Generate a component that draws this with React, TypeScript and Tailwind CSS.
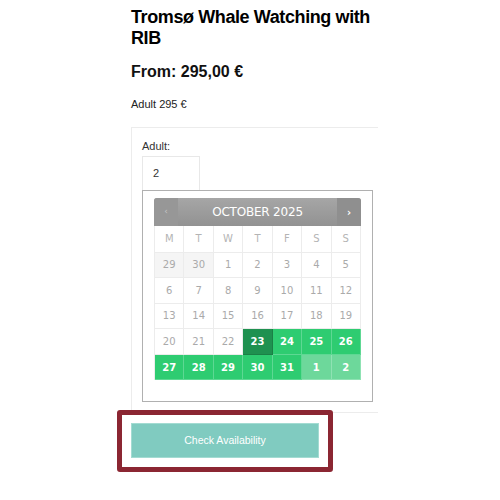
import React from "react";

type Cell = { d: string; kind: "other" | "past" | "sel" | "avail" | "next" };

const rows: Cell[][] = [
  [
    { d: "29", kind: "other" },
    { d: "30", kind: "other" },
    { d: "1", kind: "past" },
    { d: "2", kind: "past" },
    { d: "3", kind: "past" },
    { d: "4", kind: "past" },
    { d: "5", kind: "past" },
  ],
  ["6", "7", "8", "9", "10", "11", "12"].map((d) => ({ d, kind: "past" as const })),
  ["13", "14", "15", "16", "17", "18", "19"].map((d) => ({ d, kind: "past" as const })),
  [
    { d: "20", kind: "past" },
    { d: "21", kind: "past" },
    { d: "22", kind: "past" },
    { d: "23", kind: "sel" },
    { d: "24", kind: "avail" },
    { d: "25", kind: "avail" },
    { d: "26", kind: "avail" },
  ],
  [
    { d: "27", kind: "avail" },
    { d: "28", kind: "avail" },
    { d: "29", kind: "avail" },
    { d: "30", kind: "avail" },
    { d: "31", kind: "avail" },
    { d: "1", kind: "next" },
    { d: "2", kind: "next" },
  ],
];

function cellClass(kind: Cell["kind"]) {
  switch (kind) {
    case "other":
      return "bg-[#f5f5f5] text-[#aaaaaa] border-[#ececec]";
    case "past":
      return "bg-white text-[#aaaaaa] border-[#ececec]";
    case "sel":
      return "bg-[#1f9150] text-white font-bold border-[#1b8046]";
    case "avail":
      return "bg-[#2ecc71] text-white font-bold border-[#5ed893]";
    case "next":
      return "bg-[#6dd89b] text-white font-bold border-[#8fe2b3]";
  }
}

export default function App() {
  return (
    <div className="relative w-[500px] h-[500px] bg-white overflow-hidden" style={{ fontFamily: '"Liberation Sans", Arial, sans-serif' }}>
      <div className="pl-[131px] pt-[7px]">
        <h1 className="text-[18px] leading-[21px] font-bold text-black tracking-[-0.4px] w-[260px]">
          Tromsø Whale Watching with RIB
        </h1>
        <div className="mt-[13px] text-[16px] leading-[20px] font-bold text-[#111]">From: 295,00 €</div>
        <div className="mt-[15px] text-[11px] leading-[14px] text-[#222]">Adult 295 €</div>

        <div className="mt-[16px] w-[247px] border-l border-t border-b border-[#ececec] pl-[10px] pt-[11px] pb-[10px]">
          <div className="text-[11px] leading-[14px] text-[#333]">Adult:</div>
          <div className="mt-[3px] w-[58px] h-[35px] border border-[#e8e8e8] pl-[10px] pt-[9px] text-[11px] leading-[14px] text-[#333]">
            2
          </div>
          <div className="-mt-[1px] w-[231px] border border-[#b0b0b0] px-[11px] pt-[7px] pb-[21px]" style={{ fontFamily: '"DejaVu Sans", Verdana, sans-serif' }}>
            <div className="flex h-[28px] rounded-t-[3px] overflow-hidden bg-gradient-to-b from-[#a6a6a6] to-[#929292]">
              <div className="w-[24px] flex items-center justify-center text-[9px] text-[#c4c4c4] bg-[#979797]">‹</div>
              <div className="flex-1 flex items-center justify-center text-white text-[12px] tracking-[-0.2px]">OCTOBER 2025</div>
              <div className="w-[24px] flex items-center justify-center text-[10px] text-white font-bold bg-[#8f8f8f]">›</div>
            </div>
            <div className="grid grid-cols-7 border-l border-[#ececec]">
              {["M", "T", "W", "T", "F", "S", "S"].map((d, i) => (
                <div key={i} className="h-[26.5px] flex items-center justify-center text-[10px] text-[#b4b4b4] border-r border-b border-[#ececec] bg-white">
                  {d}
                </div>
              ))}
              {rows.flat().map((c, i) => (
                <div key={i} className={"h-[25.6px] flex items-center justify-center text-[10px] border-r border-b " + cellClass(c.kind)}>
                  {c.d}
                </div>
              ))}
            </div>
          </div>
        </div>

        <div className="mt-[10px] w-[188px] h-[35px] bg-[#80cbc0] border border-[#a3dbd2] flex items-center justify-center text-white text-[10.5px]">
          Check Availability
        </div>
      </div>

      <div className="absolute left-[117px] top-[410px] w-[216px] h-[62px] border-[5px] border-[#8b2632] rounded-[3px]" />
    </div>
  );
}
